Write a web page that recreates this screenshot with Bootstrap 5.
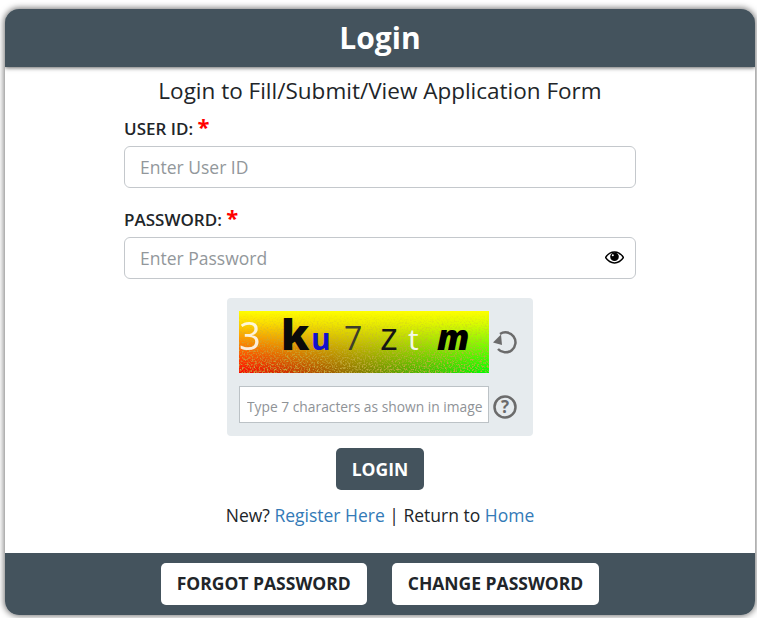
<!DOCTYPE html>
<html lang="en"><head><meta charset="utf-8"><title>Login</title>
<link href="https://cdn.jsdelivr.net/npm/bootstrap@5.3.0/dist/css/bootstrap.min.css" rel="stylesheet">
<style>
html,body{height:618px;overflow:hidden;background:#fff;}
body{font-family:"Open Sans",sans-serif;color:#212529;padding:9px 2px 3px 5px;}
.login-shell{width:750px;height:606px;border-radius:14px;overflow:hidden;box-shadow:0 0 6px 1px rgba(0,0,0,.55);display:flex;flex-direction:column;}
.login-head{height:58px;background:#44535d;color:#fff;font-size:30px;font-weight:700;line-height:58px;text-align:center;box-shadow:0 1px 4px rgba(0,0,0,.6);position:relative;}
.login-body{flex:1;}
.login-sub{font-size:22.500px;line-height:32px;margin:8px 0 0;text-align:center;}
.login-form{width:512px;margin:0 auto;padding-top:8px;}
.fld-label{font-size:17px;font-weight:600;line-height:24px;margin:0 0 5px;display:block;}
.fld-label b{color:#f00;font-size:22px;line-height:1;font-weight:700;}
.fld-input{height:42px;font-size:17.500px;padding:0 15px;border:1px solid #c4c8cc;border-radius:6px;font-family:inherit;}
.fld-input::placeholder{color:#92979b;opacity:1;}
.fld-gap{margin-bottom:18px;}
.pw-wrap{position:relative;padding-bottom:1px;}
.pw-eye{position:absolute;right:12px;top:12px;width:19px;height:17px;}
.cap-box{width:306px;height:138px;background:#e6ebee;border-radius:4px;margin:18px auto 0;padding:13px 0 0 12px;}
.cap-img{width:250px;height:62px;display:block;overflow:visible;}
.cap-side{width:28px;height:28px;margin-left:2px;}
.cap-help{margin-top:5px;}
.cap-input{width:250px;height:37px;border:1px solid #bcc2c6;background:#fff;font-size:13.800px;padding:3px 0 0 7px;font-family:inherit;border-radius:0;outline:0;display:block;}
.cap-input::placeholder{color:#8f9397;opacity:1;}
.cap-row2{margin-top:13px;}
.btn-login{background:#44535d;color:#fff;font-weight:700;font-size:17.500px;width:88px;height:42px;border:0;border-radius:5px;padding:0;display:block;margin:12px auto 0;}
.btn-login:hover{background:#44535d;color:#fff;}
.links{font-size:17.500px;line-height:24px;text-align:center;margin:13px 0 0;}
.links a{color:#337ab7;text-decoration:none;}
.login-foot{height:62px;background:#44535d;gap:25px;}
.btn-foot{background:#fff;color:#212529;font-weight:700;font-size:17.500px;height:42px;padding:0 16px 2px;border:0;border-radius:5px;}
.btn-foot:hover{background:#fff;color:#212529;}
.cap-svg text{font-family:"Open Sans",sans-serif;}
</style></head><body>
<div class="login-shell">
 <div class="login-head">Login</div>
 <div class="login-body">
  <p class="login-sub">Login to Fill/Submit/View Application Form</p>
  <form class="login-form">
   <label class="fld-label" for="uid">USER ID: <b>*</b></label>
   <input id="uid" class="form-control fld-input fld-gap" placeholder="Enter User ID">
   <label class="fld-label" for="pw">PASSWORD: <b>*</b></label>
   <div class="pw-wrap">
    <input id="pw" class="form-control fld-input" placeholder="Enter Password">
    <svg class="pw-eye" viewBox="0 0 19 17"><path d="M.5 8.500C3 4.700 6 3 9.500 3s6.500 1.700 9 5.500c-2.500 3.800-5.500 5.500-9 5.500s-6.500-1.700-9-5.500z" fill="#fff" stroke="#000" stroke-width="1.500"/><circle cx="9.500" cy="7.800" r="4.300" fill="#000"/><circle cx="7.800" cy="6.300" r="1" fill="#fff"/></svg>
   </div>
   <div class="cap-box">
    <div class="d-flex align-items-center">
     <svg class="cap-img cap-svg" viewBox="0 0 250 62" preserveAspectRatio="none">
      <defs>
       <linearGradient id="g1" x1="0" x2="1" y1="0" y2="0"><stop offset="0" stop-color="#ff0000"/><stop offset="1" stop-color="#00ff00"/></linearGradient>
       <linearGradient id="g2" x1="0" x2="0" y1="0" y2="1"><stop offset="0" stop-color="#ffff00"/><stop offset=".2" stop-color="#ffff00" stop-opacity=".85"/><stop offset="1" stop-color="#ffff00" stop-opacity="0"/></linearGradient>
       <linearGradient id="g3" x1="0" x2="0" y1="0" y2="1"><stop offset="0" stop-color="#fff" stop-opacity="0"/><stop offset=".25" stop-color="#fff" stop-opacity=".35"/><stop offset=".9" stop-color="#fff"/></linearGradient>
       <mask id="m1"><rect width="250" height="62" fill="url(#g3)"/></mask>
       <filter id="nz" x="0" y="0" width="100%" height="100%"><feTurbulence type="fractalNoise" baseFrequency=".6" numOctaves="2" seed="7"/><feColorMatrix values="0 0 0 0 .55  0 0 0 0 .42  0 0 0 0 .05  3.500 0 0 0 -1.600"/></filter>
      </defs>
      <rect width="250" height="62" fill="url(#g1)"/>
      <rect width="250" height="62" fill="url(#g2)"/>
      <rect width="250" height="62" filter="url(#nz)" mask="url(#m1)"/>
      <text x="0" y="39" font-size="38" fill="#fff" opacity=".85">3</text>
      <text x="42" y="39" font-size="43" font-weight="800" fill="#0a0a0a">k</text>
      <text x="72" y="39" font-size="30" font-weight="700" fill="#1111cc">u</text>
      <text x="105" y="39" font-size="32" fill="#3d3d2a">7</text>
      <text x="141" y="39" font-size="38" fill="#151515">z</text>
      <text x="169" y="39" font-size="30" fill="#f4f8e8">t</text>
      <text x="198" y="39" font-size="35" font-weight="800" font-style="italic" fill="#000">m</text>
     </svg>
     <svg class="cap-side" viewBox="0 0 28 28"><path d="M9 6A10 10 0 1 1 7 21" fill="none" stroke="#6b6b6b" stroke-width="2.500"/><path d="M2 14.500L10 6.500 11 17z" fill="#6b6b6b"/></svg>
    </div>
    <div class="d-flex align-items-center cap-row2">
     <input class="cap-input" placeholder="Type 7 characters as shown in image">
     <svg class="cap-side cap-help" viewBox="0 0 28 28"><circle cx="14" cy="14" r="10.500" fill="none" stroke="#6b6b6b" stroke-width="2.500"/><text x="14" y="20" text-anchor="middle" font-family="'Open Sans',sans-serif" font-size="17" font-weight="700" fill="#6b6b6b">?</text></svg>
    </div>
   </div>
   <button type="button" class="btn btn-login">LOGIN</button>
   <p class="links">New? <a href="#">Register Here</a> | Return to <a href="#">Home</a></p>
  </form>
 </div>
 <div class="login-foot d-flex justify-content-center align-items-center">
  <button type="button" class="btn btn-foot">FORGOT PASSWORD</button>
  <button type="button" class="btn btn-foot">CHANGE PASSWORD</button>
 </div>
</div>
<script src="https://cdn.jsdelivr.net/npm/bootstrap@5.3.0/dist/js/bootstrap.bundle.min.js"></script>
</body></html>
